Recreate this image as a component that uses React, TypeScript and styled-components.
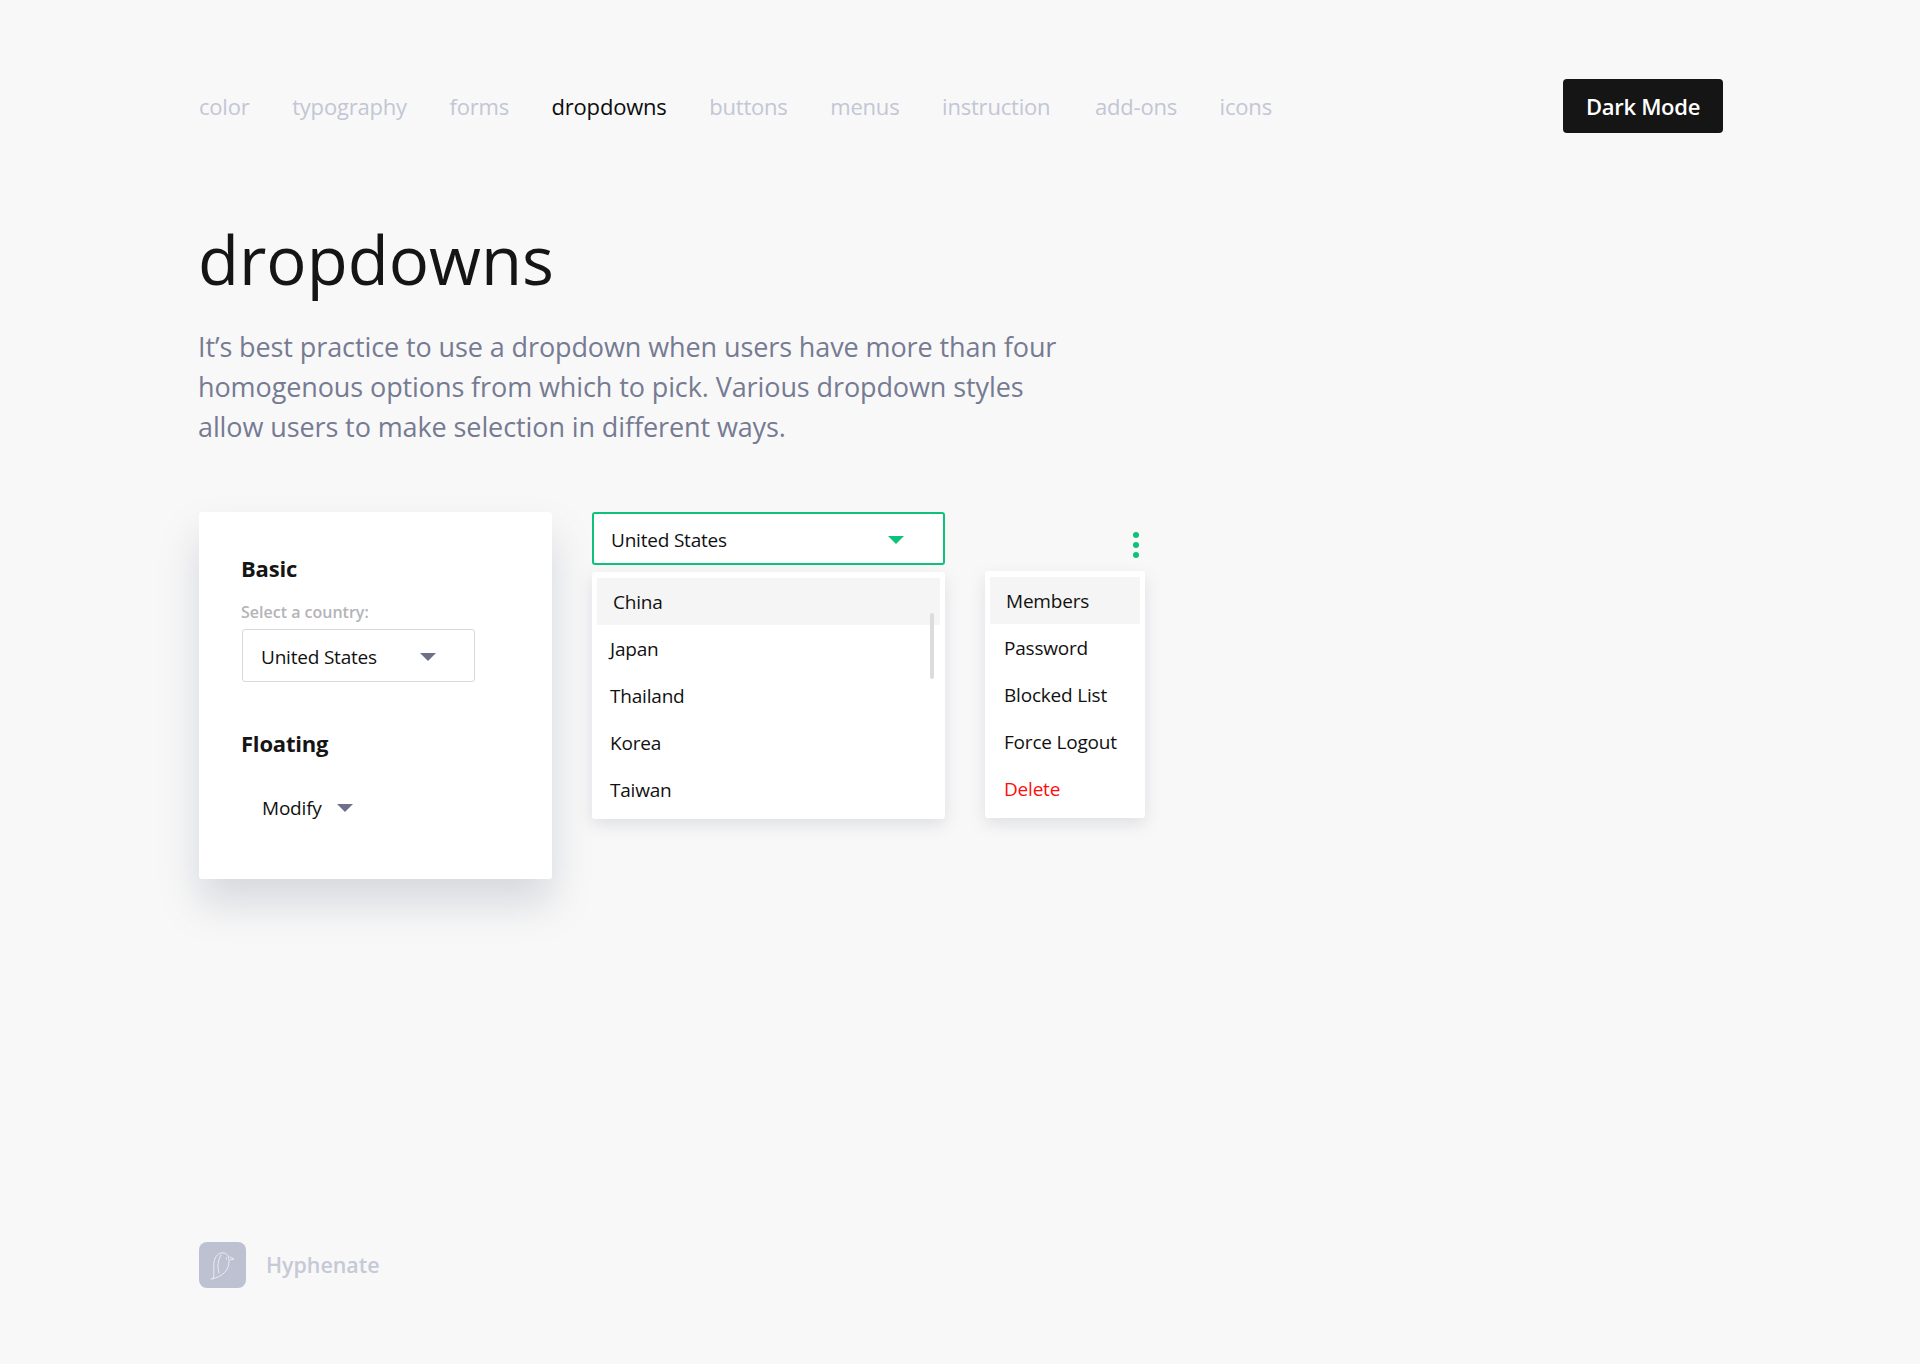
import React from "react";
import styled, { createGlobalStyle } from "styled-components";

const Global = createGlobalStyle`
  html, body { margin: 0; padding: 0; background: #f8f8f8; }
  * { box-sizing: border-box; }
  body { font-family: "Open Sans", "Liberation Sans", sans-serif; color: #111; }
`;

const Page = styled.div`
  min-height: 1364px;
  padding: 79px 197px 76px 199px;
  display: flex;
  flex-direction: column;
`;
const Header = styled.header`
  display: flex;
  align-items: center;
  justify-content: space-between;
  height: 54px;
`;
const Nav = styled.nav`
  display: flex;
  gap: 42.6px;
`;
const NavItem = styled.a<{ $active?: boolean; $wide?: boolean }>`
  margin-left: ${(p) => (p.$wide ? 2 : 0)}px;
  font-size: 22px;
  line-height: 30px;
  letter-spacing: -0.2px;
  color: ${(p) => (p.$active ? "#0d0d0d" : "#c3c6d4")};
`;
const ModeButton = styled.button`
  width: 160px;
  height: 54px;
  border: 0;
  border-radius: 4px;
  background: #151515;
  color: #fff;
  font: 600 22px "Open Sans", sans-serif;
  letter-spacing: -0.3px;
`;
const Title = styled.h1`
  margin: 78px 0 0 -1px;
  font-size: 67px;
  line-height: 96px;
  font-weight: 400;
  color: #151515;
`;
const Lead = styled.p`
  margin: 20px 0 0 -1px;
  width: 870px;
  font-size: 27px;
  line-height: 40px;
  letter-spacing: -0.1px;
  color: #767b93;
`;
const Demos = styled.section`
  display: flex;
  align-items: flex-start;
  gap: 40px;
  margin-top: 65px;
`;
const Card = styled.div`
  width: 353px;
  height: 367px;
  padding: 41px 43px;
  background: #fff;
  border-radius: 3px;
  box-shadow: 0 24px 40px rgba(110, 115, 140, 0.24);
`;
const Heading = styled.h3<{ $gap?: number }>`
  margin: ${(p) => p.$gap ?? 0}px 0 0 -1px;
  font-size: 22px;
  line-height: 30px;
  font-weight: 700;
  letter-spacing: -0.2px;
  color: #151515;
`;
const Label = styled.div`
  margin: 18px 0 0 -1px;
  font-size: 16px;
  line-height: 22px;
  font-weight: 600;
  color: #b4b4b8;
`;
const Select = styled.div`
  margin-top: 6px;
  width: 233px;
  height: 53px;
  padding: 2px 38px 0 18px;
  display: flex;
  align-items: center;
  justify-content: space-between;
  border: 1px solid #d9d9dc;
  border-radius: 3px;
  background: #fff;
  font-size: 19px;
  letter-spacing: -0.2px;
`;
const Caret = styled.span<{ $color?: string }>`
  display: block;
  width: 0;
  height: 0;
  border-left: 8px solid transparent;
  border-right: 8px solid transparent;
  border-top: 8px solid ${(p) => p.$color ?? "#6c7089"};
`;
const FloatButton = styled.div`
  margin-top: 30px;
  padding-left: 20px;
  display: flex;
  align-items: center;
  gap: 15px;
  height: 40px;
  font-size: 19px;
  letter-spacing: -0.2px;
`;
const Column = styled.div`
  width: 353px;
  display: flex;
  flex-direction: column;
  gap: 7px;
`;
const ActiveSelect = styled(Select)`
  width: 353px;
  border: 2px solid #0ec27a;
  padding: 2px 39px 0 17px;
  height: 53px;
  margin-top: 0;
`;
const Menu = styled.div`
  position: relative;
  padding: 6px 5px;
  background: #fff;
  border-radius: 3px;
  box-shadow: 0 6px 16px rgba(110, 115, 140, 0.18);
`;
const MenuItem = styled.div<{ $active?: boolean; $danger?: boolean; $indent?: number }>`
  height: 47px;
  display: flex;
  align-items: center;
  padding-left: ${(p) => (p.$active ? 16 : p.$indent ?? 13)}px;
  background: ${(p) => (p.$active ? "#f5f5f5" : "transparent")};
  color: ${(p) => (p.$danger ? "#ff0d0d" : "#111")};
  font-size: 19px;
  letter-spacing: -0.2px;
`;
const ScrollThumb = styled.div`
  position: absolute;
  top: 41px;
  right: 11px;
  width: 4px;
  height: 66px;
  border-radius: 2px;
  background: #dcdcdc;
`;
const ActionColumn = styled.div`
  width: 160px;
  display: flex;
  flex-direction: column;
  align-items: stretch;
  gap: 13px;
`;
const DotsRow = styled.div`
  display: flex;
  justify-content: flex-end;
  padding: 20px 6px 0 0;
`;
const Dots = styled.div`
  display: flex;
  flex-direction: column;
  gap: 4px;
  span {
    width: 6px;
    height: 6px;
    border-radius: 50%;
    background: #0ec27a;
  }
`;
const Footer = styled.footer`
  margin-top: auto;
  display: flex;
  align-items: center;
  gap: 20px;
`;
const LogoBox = styled.div`
  width: 47px;
  height: 46px;
  border-radius: 8px;
  background: #bdc1d1;
  display: flex;
`;
const Brand = styled.span`
  font-size: 21.4px;
  line-height: 44px;
  font-weight: 600;
  color: #c6c9d6;
`;

const navItems = ["color", "typography", "forms", "dropdowns", "buttons", "menus", "instruction", "add-ons", "icons"];

export default function App() {
  return (
    <Page>
      <Global />
      <Header>
        <Nav>
          {navItems.map((n) => (
            <NavItem key={n} $active={n === "dropdowns"} $wide={n === "add-ons"}>{n}</NavItem>
          ))}
        </Nav>
        <ModeButton>Dark Mode</ModeButton>
      </Header>
      <Title>dropdowns</Title>
      <Lead>
        It’s best practice to use a dropdown when users have more than four homogenous options from which to pick. Various dropdown styles allow users to make selection in different ways.
      </Lead>
      <Demos>
        <Card>
          <Heading>Basic</Heading>
          <Label>Select a country:</Label>
          <Select>United States<Caret /></Select>
          <Heading $gap={46}>Floating</Heading>
          <FloatButton>Modify<Caret /></FloatButton>
        </Card>
        <Column>
          <ActiveSelect>United States<Caret $color="#0ec27a" /></ActiveSelect>
          <Menu>
            <MenuItem $active>China</MenuItem>
            <MenuItem>Japan</MenuItem>
            <MenuItem>Thailand</MenuItem>
            <MenuItem>Korea</MenuItem>
            <MenuItem>Taiwan</MenuItem>
            <ScrollThumb />
          </Menu>
        </Column>
        <ActionColumn>
          <DotsRow><Dots><span /><span /><span /></Dots></DotsRow>
          <Menu>
            <MenuItem $active>Members</MenuItem>
            <MenuItem $indent={14}>Password</MenuItem>
            <MenuItem $indent={14}>Blocked List</MenuItem>
            <MenuItem $indent={14}>Force Logout</MenuItem>
            <MenuItem $indent={14} $danger>Delete</MenuItem>
          </Menu>
        </ActionColumn>
      </Demos>
      <Footer>
        <LogoBox>
          <svg width="47" height="46" viewBox="0 0 47 46" fill="none" stroke="#eef0f5" strokeWidth="0.9" strokeLinecap="round" strokeLinejoin="round">
            <path d="M14 37C16 32 14 26 15 20C16 14 20 10 25 11C29 12 30 15 30 19C30 28 24 35 12 37" />
            <path d="M22 13C19 18 18 24 20 31" />
            <path d="M31 15L35 17L31 18" />
            <path d="M27.5 16L27.5 17" />
          </svg>
        </LogoBox>
        <Brand>Hyphenate</Brand>
      </Footer>
    </Page>
  );
}
